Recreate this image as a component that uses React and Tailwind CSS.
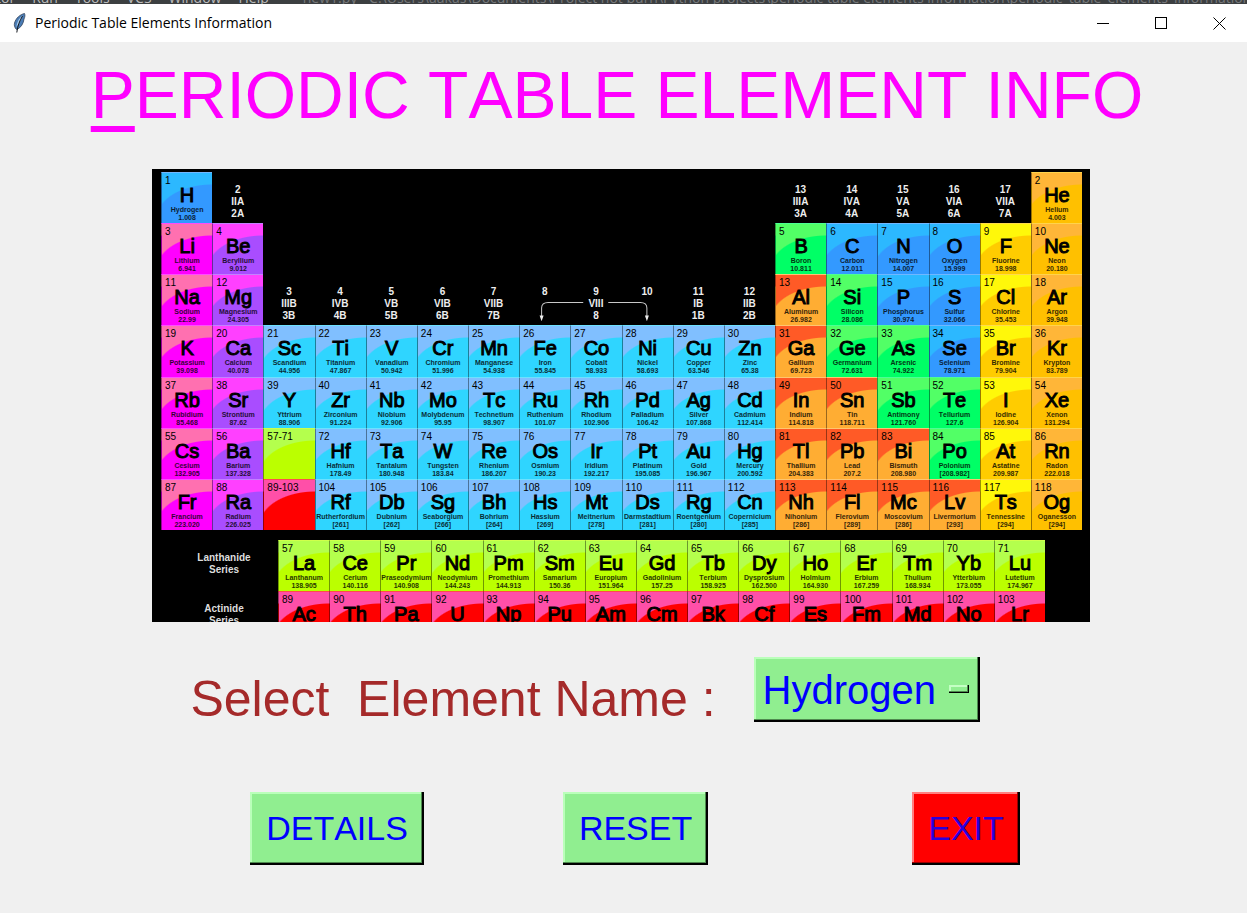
import React, { useState } from "react";

const TONES = {
  nonmetal: "[--inner:#3399ff] [--outer:#2cb8ff]",
  alkali: "[--inner:#ff00ff] [--outer:#ff70b0]",
  earth: "[--inner:#a94dff] [--outer:#ff40ff]",
  transition: "[--inner:#2fd5ff] [--outer:#80bfff]",
  semimetal: "[--inner:#00ff66] [--outer:#52ff66]",
  metal: "[--inner:#ffad33] [--outer:#ff5a26]",
  halogen: "[--inner:#ffcc00] [--outer:#fff80a]",
  noble: "[--inner:#ffc000] [--outer:#ffb638]",
  lanthanide: "[--inner:#bbff00] [--outer:#b4ff4d]",
  actinide: "[--inner:#ff0000] [--outer:#ff4fa8]",
};

const GROUPS = {
  a: "alkali",
  e: "earth",
  t: "transition",
  n: "nonmetal",
  s: "semimetal",
  m: "metal",
  h: "halogen",
  g: "noble",
};

// One line per period: column, group, number, symbol, name, weight
const PERIODS = [
  "1 n 1 H Hydrogen 1.008|18 g 2 He Helium 4.003",
  "1 a 3 Li Lithium 6.941|2 e 4 Be Beryllium 9.012|13 s 5 B Boron 10.811|14 n 6 C Carbon 12.011|15 n 7 N Nitrogen 14.007|16 n 8 O Oxygen 15.999|17 h 9 F Fluorine 18.998|18 g 10 Ne Neon 20.180",
  "1 a 11 Na Sodium 22.99|2 e 12 Mg Magnesium 24.305|13 m 13 Al Aluminum 26.982|14 s 14 Si Silicon 28.086|15 n 15 P Phosphorus 30.974|16 n 16 S Sulfur 32.066|17 h 17 Cl Chlorine 35.453|18 g 18 Ar Argon 39.948",
  "1 a 19 K Potassium 39.098|2 e 20 Ca Calcium 40.078|3 t 21 Sc Scandium 44.956|4 t 22 Ti Titanium 47.867|5 t 23 V Vanadium 50.942|6 t 24 Cr Chromium 51.996|7 t 25 Mn Manganese 54.938|8 t 26 Fe Iron 55.845|9 t 27 Co Cobalt 58.933|10 t 28 Ni Nickel 58.693|11 t 29 Cu Copper 63.546|12 t 30 Zn Zinc 65.38|13 m 31 Ga Gallium 69.723|14 s 32 Ge Germanium 72.631|15 s 33 As Arsenic 74.922|16 n 34 Se Selenium 78.971|17 h 35 Br Bromine 79.904|18 g 36 Kr Krypton 83.789",
  "1 a 37 Rb Rubidium 85.468|2 e 38 Sr Strontium 87.62|3 t 39 Y Yttrium 88.906|4 t 40 Zr Zirconium 91.224|5 t 41 Nb Niobium 92.906|6 t 42 Mo Molybdenum 95.95|7 t 43 Tc Technetium 98.907|8 t 44 Ru Ruthenium 101.07|9 t 45 Rh Rhodium 102.906|10 t 46 Pd Palladium 106.42|11 t 47 Ag Silver 107.868|12 t 48 Cd Cadmium 112.414|13 m 49 In Indium 114.818|14 m 50 Sn Tin 118.711|15 s 51 Sb Antimony 121.760|16 s 52 Te Tellurium 127.6|17 h 53 I Iodine 126.904|18 g 54 Xe Xenon 131.294",
  "1 a 55 Cs Cesium 132.905|2 e 56 Ba Barium 137.328|4 t 72 Hf Hafnium 178.49|5 t 73 Ta Tantalum 180.948|6 t 74 W Tungsten 183.84|7 t 75 Re Rhenium 186.207|8 t 76 Os Osmium 190.23|9 t 77 Ir Iridium 192.217|10 t 78 Pt Platinum 195.085|11 t 79 Au Gold 196.967|12 t 80 Hg Mercury 200.592|13 m 81 Tl Thallium 204.383|14 m 82 Pb Lead 207.2|15 m 83 Bi Bismuth 208.980|16 s 84 Po Polonium [208.982]|17 h 85 At Astatine 209.987|18 g 86 Rn Radon 222.018",
  "1 a 87 Fr Francium 223.020|2 e 88 Ra Radium 226.025|4 t 104 Rf Rutherfordium [261]|5 t 105 Db Dubnium [262]|6 t 106 Sg Seaborgium [266]|7 t 107 Bh Bohrium [264]|8 t 108 Hs Hassium [269]|9 t 109 Mt Meitnerium [278]|10 t 110 Ds Darmstadtium [281]|11 t 111 Rg Roentgenium [280]|12 t 112 Cn Copernicium [285]|13 m 113 Nh Nihonium [286]|14 m 114 Fl Flerovium [289]|15 m 115 Mc Moscovium [286]|16 m 116 Lv Livermorium [293]|17 h 117 Ts Tennessine [294]|18 g 118 Og Oganesson [294]",
];

const ELEMENTS = PERIODS.flatMap((line, row) =>
  line.split("|").map((entry) => {
    const [column, group, number, symbol, name, weight] = entry.split(" ");
    return { row: row + 1, column: Number(column), tone: GROUPS[group], number, symbol, name, weight };
  })
);

const parseSeries = (text) =>
  text.split("|").map((entry) => {
    const [number, symbol, name, weight] = entry.split(" ");
    return { number, symbol, name, weight };
  });

const LANTHANIDES = parseSeries(
  "57 La Lanthanum 138.905|58 Ce Cerium 140.116|59 Pr Praseodymium 140.908|60 Nd Neodymium 144.243|61 Pm Promethium 144.913|62 Sm Samarium 150.36|63 Eu Europium 151.964|64 Gd Gadolinium 157.25|65 Tb Terbium 158.925|66 Dy Dysprosium 162.500|67 Ho Holmium 164.930|68 Er Erbium 167.259|69 Tm Thulium 168.934|70 Yb Ytterbium 173.055|71 Lu Lutetium 174.967"
);

const ACTINIDES = parseSeries(
  "89 Ac|90 Th|91 Pa|92 U|93 Np|94 Pu|95 Am|96 Cm|97 Bk|98 Cf|99 Es|100 Fm|101 Md|102 No|103 Lr"
);

const HEADERS = [
  { column: 2, row: 1, lines: ["2", "IIA", "2A"] },
  { column: 13, row: 1, lines: ["13", "IIIA", "3A"] },
  { column: 14, row: 1, lines: ["14", "IVA", "4A"] },
  { column: 15, row: 1, lines: ["15", "VA", "5A"] },
  { column: 16, row: 1, lines: ["16", "VIA", "6A"] },
  { column: 17, row: 1, lines: ["17", "VIIA", "7A"] },
  { column: 3, row: 3, lines: ["3", "IIIB", "3B"] },
  { column: 4, row: 3, lines: ["4", "IVB", "4B"] },
  { column: 5, row: 3, lines: ["5", "VB", "5B"] },
  { column: 6, row: 3, lines: ["6", "VIB", "6B"] },
  { column: 7, row: 3, lines: ["7", "VIIB", "7B"] },
  { column: 8, row: 3, lines: ["8", "", ""] },
  { column: 9, row: 3, lines: ["9", "VIII", "8"] },
  { column: 10, row: 3, lines: ["10", "", ""] },
  { column: 11, row: 3, lines: ["11", "IB", "1B"] },
  { column: 12, row: 3, lines: ["12", "IIB", "2B"] },
];

const MENU = ["tor", "Run", "Tools", "VCS", "Window", "Help"];

const RAISED_GREEN =
  "bg-[#90ee90] shadow-[inset_-2px_-2px_0_#000,inset_-3px_-3px_0_#4f8a4f,inset_2px_2px_0_#baffba]";
const RAISED_RED =
  "bg-[#ff0000] shadow-[inset_-2px_-2px_0_#000,inset_-3px_-3px_0_#990000,inset_2px_2px_0_#ff8080]";

function Cell({ tone, number, symbol, name, weight, row, column }) {
  return (
    <div
      className={`flex min-w-0 flex-col items-center overflow-hidden border-t border-l border-t-white/30 border-l-black/40 bg-[radial-gradient(ellipse_56px_34px_at_100%_45px,var(--inner)_97%,var(--outer)_100%)] text-black ${TONES[tone]}`}
      style={row ? { gridRow: row, gridColumn: column } : undefined}
    >
      <span className="self-start pt-[3px] pl-[3px] text-[10px] leading-[9px]">{number}</span>
      <span className="text-[20px] leading-[21px] [-webkit-text-stroke:1px]">{symbol}</span>
      <span className="text-[7px] leading-[8px] font-bold whitespace-nowrap opacity-80">{name}</span>
      <span className="text-[7px] leading-[8px] font-bold whitespace-nowrap opacity-80">{weight}</span>
    </div>
  );
}

function Series({ label, tone, items }) {
  return (
    <div className="grid grid-cols-[117px_repeat(15,minmax(0,1fr))] auto-rows-[51px] pr-[37px]">
      <div className="pt-3 pl-[9px] text-center text-[10px] leading-3 font-bold text-[#dddddd]">
        {label}
        <br />
        Series
      </div>
      {items.map((item) => (
        <Cell key={item.number} tone={tone} {...item} />
      ))}
    </div>
  );
}

function PeriodicTable() {
  return (
    <section
      aria-label="Periodic table"
      className="h-[453px] w-full max-w-[938px] overflow-hidden bg-black pt-[3px] pr-[8px] pl-[9px]"
    >
      <div className="grid h-[358px] grid-cols-18 grid-rows-7">
        {HEADERS.map(({ column, row, lines }) => (
          <div
            key={column}
            className="flex flex-col items-center justify-end pb-[3px] text-[10px] leading-3 font-bold text-[#eeeeee]"
            style={{ gridRow: row, gridColumn: column }}
          >
            {lines.map((line, i) => (
              <span key={i} className="h-3">
                {line}
              </span>
            ))}
          </div>
        ))}
        <svg
          viewBox="0 0 153 51"
          className="col-span-3 col-start-8 row-start-3 h-full w-full"
          fill="none"
          stroke="#c8c8c8"
          aria-hidden="true"
        >
          <path d="M64 28.5H29Q22.5 28.5 22.5 34V43" />
          <path d="M89 28.5H121Q127.5 28.5 127.5 34V43" />
          <path d="M20.5 41.5H24.5L22.5 47ZM125.5 41.5H129.5L127.5 47Z" fill="#eeeeee" stroke="none" />
        </svg>
        {ELEMENTS.map((element) => (
          <Cell key={element.number} {...element} />
        ))}
        <Cell tone="lanthanide" number="57-71" row={6} column={3} />
        <Cell tone="actinide" number="89-103" row={7} column={3} />
      </div>
      <div className="mt-[10px]">
        <Series label="Lanthanide" tone="lanthanide" items={LANTHANIDES} />
        <Series label="Actinide" tone="actinide" items={ACTINIDES} />
      </div>
    </section>
  );
}

function Feather() {
  return (
    <svg viewBox="0 0 14 20" className="h-5 w-[14px]" aria-hidden="true">
      <path d="M11.5 0.5C7 1.5 3 5 1.5 10C1 12.5 1.5 14 3 16L4 16.5C8 14.5 10.5 10.5 11 6C12 4 12.2 2 11.5 0.5Z" fill="#4a7cb5" stroke="#33445c" strokeWidth="0.8" />
      <path d="M9.5 2.500C6 5 4 9 3.3 14C6 11 8 7 9.5 2.5Z" fill="#a9cdee" />
      <path d="M9.5 3C6.5 8 4.5 13 3.8 19.5" fill="none" stroke="#14181f" strokeWidth="1" />
    </svg>
  );
}

export default function App() {
  const [selected, setSelected] = useState("Hydrogen");
  const names = [...ELEMENTS, ...LANTHANIDES]
    .sort((a, b) => a.number - b.number)
    .map((element) => element.name);

  return (
    <div className="flex min-h-screen flex-col overflow-hidden bg-[#f0f0f0] font-['Liberation_Sans',Arial,sans-serif] [font-kerning:none]">
      <div className="flex h-1 items-end overflow-hidden bg-[#3c3f41] font-['Open_Sans',sans-serif] text-[14px] leading-[13px] whitespace-nowrap text-[#bbbbbb]">
        <div className="-ml-1 flex gap-[17px]">
          {MENU.map((item) => (
            <span key={item}>{item}</span>
          ))}
        </div>
        <span className="ml-[34px] text-[#77797b]">
          new1.py - C:\Users\aakas\Documents\Project not burn\Python projects\periodic table elements information\periodic_table_elements_information
        </span>
      </div>

      <header className="flex h-[38px] items-center bg-white pl-[13px] text-black">
        <Feather />
        <span className="ml-2 font-['Open_Sans',sans-serif] text-[14px] leading-5">Periodic Table Elements Information</span>
        <div className="-mr-px ml-auto flex">
          <button type="button" aria-label="Minimize" className="flex h-[38px] w-[58px] items-center justify-center">
            <svg viewBox="0 0 13 13" className="size-[13px]" shapeRendering="crispEdges" stroke="#000" fill="none">
              <path d="M0 6.5H12" />
            </svg>
          </button>
          <button type="button" aria-label="Maximize" className="flex h-[38px] w-[58px] items-center justify-center">
            <svg viewBox="0 0 13 13" className="size-[13px]" shapeRendering="crispEdges" stroke="#000" fill="none">
              <path d="M0.5 0.5H11.5V11.5H0.5Z" />
            </svg>
          </button>
          <button type="button" aria-label="Close" className="flex h-[38px] w-[58px] items-center justify-center">
            <svg viewBox="0 0 13 13" className="size-[13px]" stroke="#000" fill="none">
              <path d="M0.5 0.5L12.5 12.5M12.5 0.5L0.5 12.5" />
            </svg>
          </button>
        </div>
      </header>

      <main className="flex flex-col items-center pt-[15px]">
        <h1 className="pr-[13px] text-[66px] leading-[76px] whitespace-nowrap text-[#ff00ff]">
          <span className="underline decoration-[6px] underline-offset-[8px]">P</span>ERIODIC TABLE ELEMENT INFO
        </h1>

        <div className="mt-9 flex w-full justify-center pr-[5px]">
          <PeriodicTable />
        </div>

        <div className="mt-[35px] flex items-start gap-[38px] pr-[77px]">
          <label htmlFor="element" className="pt-[13px] text-[50px] leading-[58px] whitespace-pre text-[#a52a2a]">
            {"Select  Element Name :"}
          </label>
          <div className="relative">
            <select
              id="element"
              value={selected}
              onChange={(event) => setSelected(event.target.value)}
              className={`h-[65px] w-[226px] appearance-none pl-[9px] text-[40px] leading-[46px] text-[#0000ff] ${RAISED_GREEN}`}
            >
              {names.map((name) => (
                <option key={name}>{name}</option>
              ))}
            </select>
            <span className="pointer-events-none absolute top-7 right-[11px] h-2 w-5 bg-[#90ee90] shadow-[inset_-1px_-1px_0_#000,inset_-2px_-2px_0_#4f8a4f,inset_2px_2px_0_#c4ffc4]" />
          </div>
        </div>

        <div className="mt-16 flex items-start pl-[23px] text-[34px] leading-[39px] text-[#0000ff]">
          <button type="button" className={`h-[73px] px-4 ${RAISED_GREEN}`}>
            DETAILS
          </button>
          <button type="button" onClick={() => setSelected("Hydrogen")} className={`ml-[139px] h-[73px] px-4 ${RAISED_GREEN}`}>
            RESET
          </button>
          <button type="button" className={`ml-[204px] h-[73px] px-4 text-[#2a00dd] ${RAISED_RED}`}>
            EXIT
          </button>
        </div>
      </main>
    </div>
  );
}
